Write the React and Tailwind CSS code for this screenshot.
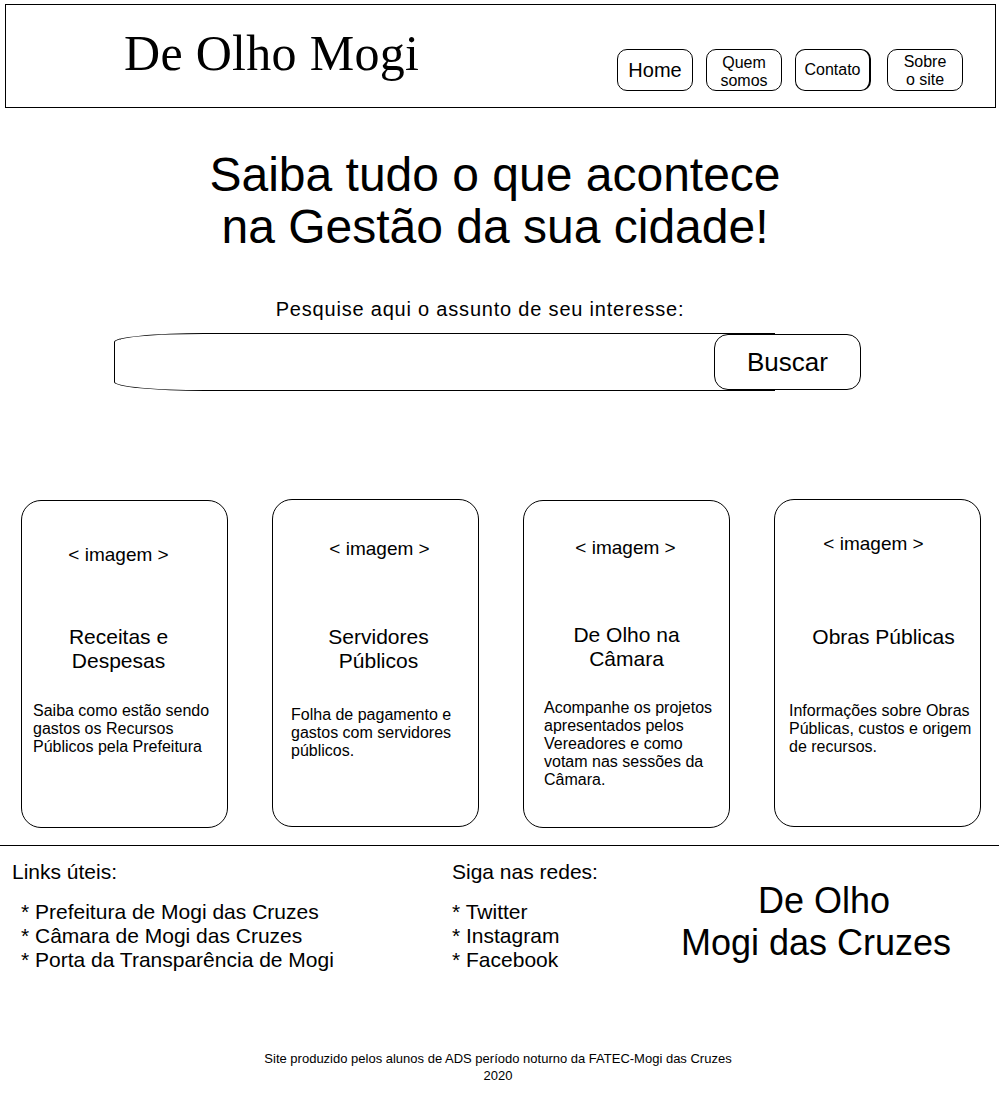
const navItems = [
  { label: 'Home', lines: ['Home'], className: 'text-[20px] leading-[24px]', box: 'ml-0' },
  { label: 'Quem somos', lines: ['Quem', 'somos'], className: 'text-[16px] leading-[18px]', box: 'ml-[13px] pt-[3px]' },
  { label: 'Contato', lines: ['Contato'], className: 'text-[16px] leading-[18px]', box: 'ml-[13px] border-r-2' },
  { label: 'Sobre o site', lines: ['Sobre', 'o site'], className: 'text-[16px] leading-[18px]', box: 'ml-[16px] pt-[1px]' },
];

const cards = [
  {
    title: ['Receitas e', 'Despesas'],
    desc: ['Saiba como estão sendo', 'gastos os Recursos', 'Públicos pela Prefeitura'],
    card: 'mt-0',
    img: 'mt-[43px] -translate-x-[6px]',
    head: 'mt-[59px] -translate-x-[6px]',
    text: 'mt-[29px] pl-[11px]',
  },
  {
    title: ['Servidores', 'Públicos'],
    desc: ['Folha de pagamento e', 'gastos com servidores', 'públicos.'],
    card: '-mt-px',
    img: 'mt-[38px] translate-x-[4px]',
    head: 'mt-[65px] translate-x-[3px]',
    text: 'mt-[33px] pl-[18px]',
  },
  {
    title: ['De Olho na', 'Câmara'],
    desc: ['Acompanhe os projetos', 'apresentados pelos', 'Vereadores e como', 'votam nas sessões da', 'Câmara.'],
    card: 'mt-0',
    img: 'mt-[36px] -translate-x-[1px]',
    head: 'mt-[64px] translate-x-0',
    text: 'mt-[28px] pl-[20px]',
  },
  {
    title: ['Obras Públicas'],
    desc: ['Informações sobre Obras', 'Públicas, custos e origem', 'de recursos.'],
    card: '-mt-px',
    img: 'mt-[33px] -translate-x-[4px]',
    head: 'mt-[70px] translate-x-[6px]',
    text: 'mt-[29px] pl-[14px]',
  },
];

const links = ['Prefeitura de Mogi das Cruzes', 'Câmara de Mogi das Cruzes', 'Porta da Transparência de Mogi'];
const redes = ['Twitter', 'Instagram', 'Facebook'];

const App = () => {
  return (
    <div className="w-[1001px] min-h-[1102px] bg-white text-black font-['Liberation_Sans',Arial,sans-serif] overflow-hidden">
      {/* cabeçalho */}
      <header className="mt-1 ml-[5px] w-[991px] h-[104px] border border-black flex justify-between">
        <h1 className="pl-[118px] pt-[18px] text-[50px] leading-[60px] font-['Liberation_Serif','Times_New_Roman',serif] tracking-[0.3px]">
          De Olho Mogi
        </h1>
        <nav className="flex items-start pt-[44px] pr-[32px]">
          {navItems.map((item) => (
            <button
              key={item.label}
              type="button"
              className={`w-[76px] h-[42px] border border-black rounded-[10px] flex flex-col items-center justify-center ${item.box}`}
            >
              {item.lines.map((l) => (
                <span key={l} className={item.className}>{l}</span>
              ))}
            </button>
          ))}
        </nav>
      </header>

      {/* destaque */}
      <h2 className="mt-[41px] pr-[11px] text-center text-[48px] leading-[52px]">
        Saiba tudo o que acontece
        <br />
        na Gestão da sua cidade!
      </h2>

      <p className="mt-[44px] pr-[41px] text-center text-[20px] leading-[24px] tracking-[0.8px]">
        Pesquise aqui o assunto de seu interesse:
      </p>

      <form className="mt-[12px] ml-[114px] flex items-start">
        <div className="w-[661px] h-[58px] border-y border-l border-black rounded-l-[90px_9px] flex">
          <input type="text" className="flex-1 min-w-0 bg-transparent outline-none px-4 text-[20px]" />
        </div>
        <button
          type="button"
          className="relative -ml-[61px] mt-px w-[147px] h-[56px] border border-black rounded-[14px] bg-white text-[26px] leading-[30px]"
        >
          Buscar
        </button>
      </form>

      {/* cards */}
      <section className="mt-[109px] ml-[21px] flex items-start gap-[44px]">
        {cards.map((c) => (
          <div
            key={c.title.join(' ')}
            className={`w-[207px] h-[328px] border border-black rounded-[20px] flex flex-col ${c.card}`}
          >
            <p className={`text-center text-[19px] leading-[22px] ${c.img}`}>&lt; imagem &gt;</p>
            <div className={`h-[48px] text-center text-[21px] leading-[24px] ${c.head}`}>
              {c.title.map((t) => (
                <div key={t}>{t}</div>
              ))}
            </div>
            <div className={`text-[16px] leading-[18px] ${c.text}`}>
              {c.desc.map((d) => (
                <div key={d} className="whitespace-nowrap">{d}</div>
              ))}
            </div>
          </div>
        ))}
      </section>

      {/* rodapé */}
      <footer className="mt-[17px] w-[999px] border-t border-black">
        <div className="flex pt-[14px]">
          <div className="w-[452px] pl-[12px]">
            <h4 className="text-[21px] leading-[24px]">Links úteis:</h4>
            <ul className="mt-[16px] pl-[9px] text-[21px] leading-[24px]">
              {links.map((l) => (
                <li key={l} className="whitespace-nowrap">* {l}</li>
              ))}
            </ul>
          </div>
          <div className="w-[220px]">
            <h4 className="text-[21px] leading-[24px]">Siga nas redes:</h4>
            <ul className="mt-[16px] text-[21px] leading-[24px]">
              {redes.map((r) => (
                <li key={r}>* {r}</li>
              ))}
            </ul>
          </div>
          <div className="w-[288px] mt-[20px] text-center text-[36px] leading-[42px]">
            <div className="translate-x-[8px]">De Olho</div>
            <div>Mogi das Cruzes</div>
          </div>
        </div>
        <p className="mt-[78px] pr-[3px] text-center text-[13px] leading-[17px]">
          Site produzido pelos alunos de ADS período noturno da FATEC-Mogi das Cruzes
          <br />
          2020
        </p>
      </footer>
    </div>
  );
};

export default App;
